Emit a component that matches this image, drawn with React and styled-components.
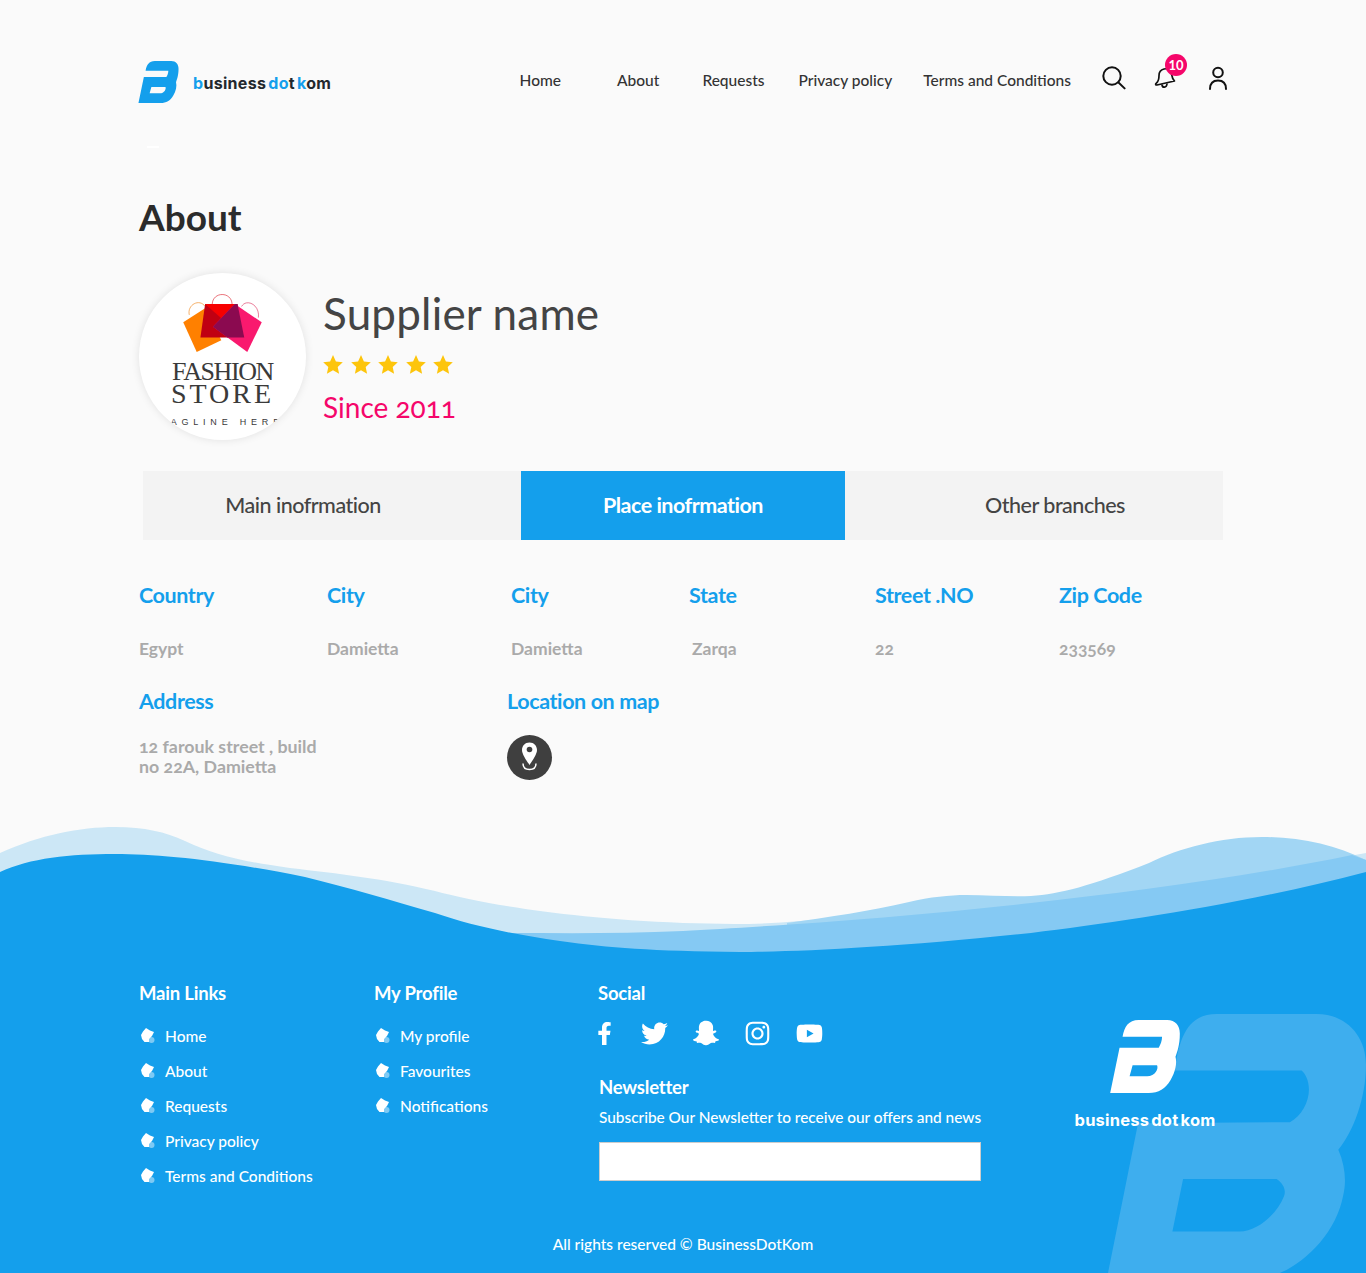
import styled, { createGlobalStyle } from 'styled-components';
import { FaFacebookF, FaTwitter, FaSnapchatGhost, FaInstagram, FaYoutube } from 'react-icons/fa';

const BLUE = '#149fec';
const PINK = '#f5066a';

const navLinks = [
  { label: 'Home', gap: 0 },
  { label: 'About', gap: 56 },
  { label: 'Requests', gap: 43 },
  { label: 'Privacy policy', gap: 34 },
  { label: 'Terms and Conditions', gap: 31 },
];

const infoCols = [
  { heading: 'Country', value: 'Egypt', width: 188 },
  { heading: 'City', value: 'Damietta', width: 184 },
  { heading: 'City', value: 'Damietta', width: 178 },
  { heading: 'State', value: 'Zarqa', width: 186, inset: 3 },
  { heading: 'Street .NO', value: '22', width: 184 },
  { heading: 'Zip Code', value: '233569', width: 170 },
];

const mainLinks = ['Home', 'About', 'Requests', 'Privacy policy', 'Terms and Conditions'];
const profileLinks = ['My profile', 'Favourites', 'Notifications'];

function LogoMark({ color, width, height }) {
  return (
    <svg width={width} height={height} viewBox="150 45 208 218" fill={color}>
      <path
        fillRule="evenodd"
        d="M187 95 C192 65 205 45 235 45 L320 45 C345 45 358 62 358 85 C358 120 350 140 345 155 C350 175 345 200 330 225 C315 250 295 263 265 263 L150 263 L178 128 L295 128 C300 118 305 108 305 95 Z M217 180 L290 180 C295 190 285 213 260 213 L208 213 Z"
      />
    </svg>
  );
}

function SearchIcon() {
  return (
    <svg width="24" height="24" viewBox="0 0 24 24" fill="none" stroke="#111" strokeWidth="2" strokeLinecap="round">
      <circle cx="10" cy="10" r="8.7" />
      <path d="M16.5 16.5 L22.6 22.4" />
    </svg>
  );
}

function BellIcon() {
  return (
    <svg width="22" height="24" viewBox="0 0 22 24" fill="none" stroke="#111" strokeWidth="1.7" strokeLinejoin="round" strokeLinecap="round">
      <path d="M10 3 C14 2 17 4 17.5 8 C18 11 18.5 13 20.5 15 L3 19 C1.5 19 1 18 2.5 17 C5 15 5 12 5 9.500 C5 6 7 3.700 10 3 Z" />
      <path d="M8 19 C8.500 22 12.500 22 13 18" />
    </svg>
  );
}

function UserIcon() {
  return (
    <svg width="20" height="24" viewBox="0 0 20 24" fill="none" stroke="#111" strokeWidth="2" strokeLinecap="round">
      <circle cx="10" cy="6.500" r="4.800" />
      <path d="M2 23 C2 17.500 5 14.500 10 14.500 C15 14.500 18 17.500 18 23" />
    </svg>
  );
}

function Star() {
  return (
    <svg width="20" height="19" viewBox="0 0 20 19" fill="#fdc50c">
      <path d="M10 0 L12.900 6.400 L19.800 7.200 L14.700 11.900 L16.100 18.800 L10 15.300 L3.900 18.800 L5.300 11.900 L0.200 7.200 L7.100 6.400 Z" />
    </svg>
  );
}

function Bags() {
  return (
    <svg width="106" height="60" viewBox="155 85 240 178">
      <path d="M175 150 C168 120 205 100 222 125" fill="none" stroke="#f08a24" strokeWidth="2" />
      <path d="M243 118 C245 80 300 80 302 118" fill="none" stroke="#e0303c" strokeWidth="2" />
      <path d="M330 125 C345 100 385 120 380 158" fill="none" stroke="#e0406a" strokeWidth="2" />
      <path d="M157 172 L222 130 L270 225 L197 260 Z" fill="#ff8000" />
      <path d="M222 118 L318 118 L338 217 L208 217 Z" fill="#c00012" />
      <path d="M222 118 L310 118 L270 160 Z" fill="#f70000" />
      <path d="M310 118 L390 172 L347 260 L245 185 Z" fill="#f9196e" />
      <path d="M310 118 L318 118 L338 217 L288 217 L245 185 Z" fill="#8b0a50" />
    </svg>
  );
}

function PinIcon() {
  return (
    <svg width="45" height="45" viewBox="0 0 45 45">
      <path d="M22.500 7.500 C27 7.500 30 11 30 15 C30 19.500 25 26 22.500 30 C20 26 15 19.500 15 15 C15 11 18 7.500 22.500 7.500 Z" fill="#fff" />
      <circle cx="22.500" cy="14.500" r="2.800" fill="#3f3f3f" />
      <path d="M16 28.500 C16 33 19 34.500 22.500 34.500 C26 34.500 29 33 29 28.500" fill="none" stroke="#fff" strokeWidth="1.500" />
    </svg>
  );
}

function Bullet() {
  return (
    <svg width="14" height="16" viewBox="0 0 14 16">
      <path d="M5 0 L9 2.500 L13 4 L11 8 L8 11 L8 14 L3.500 14 L1 11 L0 7 L2 3.500 Z" fill="#fff" />
      <circle cx="10.500" cy="12" r="3" fill="#fff" opacity="0.45" />
    </svg>
  );
}

function Waves() {
  return (
    <WaveArt viewBox="0 825 1366 130" preserveAspectRatio="none">
      <path
        fill="#cce7f6"
        d="M0 853 C40 835 80 827 115 827 C145 827 165 832 185 841 C215 855 240 861 290 868 C340 874 380 878 435 891 C480 903 560 918 683 923 C720 924 760 925 800 921 L1031 903 C1100 898 1220 880 1366 853 L1366 955 L0 955 Z"
      />
      <path
        fill="#a2d6f4"
        d="M787 923 C830 917 870 911 909 902 C930 897 950 895 966 895 C990 895 1010 897 1031 896 C1060 894 1090 886 1149 863 C1180 848 1220 837 1262 837 C1300 837 1335 845 1366 860 L1366 955 L787 955 Z"
      />
      <path
        fill="#85c9f3"
        d="M500 933 C560 933 620 934 683 931 C760 927 900 918 1031 903 C1130 892 1240 878 1352 855 L1366 860 L1366 955 L500 955 Z"
      />
      <path
        fill={BLUE}
        d="M0 872 C30 858 70 854 115 854 C160 854 220 860 305 877 C350 888 390 900 435 913 C470 925 510 934 560 941 C610 948 650 951 740 952 C800 952 900 947 1031 933 C1120 922 1240 905 1366 872 L1366 955 L0 955 Z"
      />
    </WaveArt>
  );
}

function LinkColumn({ title, links, width }) {
  return (
    <FooterCol $width={width}>
      <FooterTitle>{title}</FooterTitle>
      <FooterList>
        {links.map((link) => (
          <FooterLink key={link}>
            <Bullet />
            {link}
          </FooterLink>
        ))}
      </FooterList>
    </FooterCol>
  );
}

export default function App() {
  return (
    <>
      <GlobalStyle />
      <Container>
        <Header>
          <Brand>
            <LogoMark color={BLUE} width={41} height={42} />
            <BrandText>
              <em>b</em>usiness <em>do</em>t <em>k</em>om
            </BrandText>
          </Brand>
          <Nav>
            {navLinks.map(({ label, gap }) => (
              <NavLink key={label} $gap={gap}>
                {label}
              </NavLink>
            ))}
          </Nav>
          <IconBar>
            <SearchIcon />
            <BellWrap>
              <BellIcon />
              <Badge>10</Badge>
            </BellWrap>
            <UserIcon />
          </IconBar>
        </Header>
        <Dash />

        <PageTitle>About</PageTitle>

        <Profile>
          <Avatar>
            <Bags />
            <FashionLine>FASHION</FashionLine>
            <StoreLine>STORE</StoreLine>
            <TagLine>TAGLINE HERE</TagLine>
          </Avatar>
          <div>
            <SupplierName>Supplier name</SupplierName>
            <Stars>
              {[0, 1, 2, 3, 4].map((i) => (
                <Star key={i} />
              ))}
            </Stars>
            <Since>Since 2011</Since>
          </div>
        </Profile>

        <Tabs>
          <Tab $shift={-58}>Main inofrmation</Tab>
          <Tab $active>Place inofrmation</Tab>
          <Tab $shift={42}>Other branches</Tab>
        </Tabs>

        <InfoRow>
          {infoCols.map(({ heading, value, width, inset }) => (
            <InfoCol key={heading + width} $width={width}>
              <InfoHeading>{heading}</InfoHeading>
              <InfoValue $inset={inset}>{value}</InfoValue>
            </InfoCol>
          ))}
        </InfoRow>

        <DetailRow>
          <InfoCol $width={368}>
            <InfoHeading>Address</InfoHeading>
            <AddressText>
              12 farouk street , build
              <br />
              no 22A, Damietta
            </AddressText>
          </InfoCol>
          <InfoCol $width={300}>
            <InfoHeading>Location on map</InfoHeading>
            <PinButton>
              <PinIcon />
            </PinButton>
          </InfoCol>
        </DetailRow>
      </Container>

      <Footer>
        <Waves />
        <FooterBody>
          <Watermark viewBox="145 28 773 776" fill="#3eaeee">
            <path
              fillRule="evenodd"
              d="M345 197 C360 80 395 28 470 28 L770 28 C860 28 918 95 918 180 C918 280 880 380 835 435 C855 480 860 530 850 570 C830 680 740 770 660 804 L145 804 L235 355 L690 352 C725 335 747 290 747 255 C747 225 735 205 725 197 Z M370 522 L650 522 C670 535 680 555 672 575 C650 630 590 680 540 680 L338 680 Z"
            />
          </Watermark>
          <FooterRow>
            <LinkColumn title="Main Links" links={mainLinks} width={235} />
            <LinkColumn title="My Profile" links={profileLinks} width={224} />
            <SocialCol>
              <FooterTitle>Social</FooterTitle>
              <SocialRow>
                <FaFacebookF size={23} />
                <FaTwitter size={27} />
                <FaSnapchatGhost size={26} />
                <FaInstagram size={27} />
                <FaYoutube size={27} />
              </SocialRow>
              <NewsTitle>Newsletter</NewsTitle>
              <NewsText>Subscribe Our Newsletter to receive our offers and news</NewsText>
              <NewsInput type="text" />
            </SocialCol>
            <FooterBrand>
              <LogoMark color="#fff" width={70} height={73} />
              <FooterBrandText>business dot kom</FooterBrandText>
            </FooterBrand>
          </FooterRow>
          <Copyright>All rights reserved © BusinessDotKom</Copyright>
        </FooterBody>
      </Footer>
    </>
  );
}

const GlobalStyle = createGlobalStyle`
  * {
    box-sizing: border-box;
  }

  body {
    margin: 0;
    background: #fafafa;
    font-family: 'Lato', 'Open Sans', sans-serif;
    font-feature-settings: 'onum';
  }
`;

const Container = styled.div`
  width: 1366px;
  height: 825px;
  padding: 61px 138px 0;
`;

const Header = styled.header`
  display: flex;
  align-items: center;
  height: 42px;
`;

const Brand = styled.div`
  display: flex;
  align-items: center;
  width: 382px;
`;

const BrandText = styled.span`
  margin-left: 14px;
  margin-top: 2px;
  font-family: 'Inter', sans-serif;
  font-size: 16px;
  font-weight: 700;
  letter-spacing: 0.3px;
  word-spacing: -2px;
  color: #23282d;
  white-space: nowrap;

  em {
    font-style: normal;
    color: ${BLUE};
  }
`;

const Nav = styled.nav`
  display: flex;
  margin-bottom: 4px;
`;

const NavLink = styled.a`
  margin-left: ${({ $gap }) => $gap}px;
  font-size: 15.5px;
  font-weight: 500;
  color: #333;
  white-space: nowrap;
`;

const IconBar = styled.div`
  display: flex;
  align-items: center;
  gap: 30px;
  margin-left: 31px;
  margin-bottom: 8px;
`;

const BellWrap = styled.div`
  position: relative;
  display: flex;
  margin: 0 2px 0 -2px;
`;

const Badge = styled.span`
  position: absolute;
  top: -12px;
  left: 11px;
  width: 22px;
  height: 22px;
  border-radius: 50%;
  background: ${PINK};
  color: #fff;
  font-size: 13px;
  font-weight: 700;
  font-feature-settings: 'lnum';
  line-height: 22px;
  text-align: center;
`;

const Dash = styled.div`
  width: 12px;
  height: 2px;
  margin: 43px 0 0 9px;
  background: #fff;
`;

const PageTitle = styled.h1`
  margin: 46px 0 0 1px;
  font-size: 37px;
  line-height: 46px;
  font-weight: 700;
  color: #2b2b2b;
`;

const Profile = styled.section`
  display: flex;
  align-items: flex-start;
  gap: 17px;
  margin: 33px 0 0 1px;
`;

const Avatar = styled.div`
  display: flex;
  flex-direction: column;
  align-items: center;
  flex-shrink: 0;
  width: 167px;
  height: 167px;
  padding-top: 20px;
  overflow: hidden;
  border-radius: 50%;
  background: #fff;
  box-shadow: 0 0 8px rgba(0, 0, 0, 0.1);
  font-family: 'Liberation Serif', serif;
  color: #3a3a3a;
`;

const FashionLine = styled.span`
  margin-top: 7px;
  font-size: 26px;
  line-height: 24px;
  letter-spacing: -1.400px;
`;

const StoreLine = styled.span`
  font-size: 28px;
  line-height: 20px;
  letter-spacing: 3px;
`;

const TagLine = styled.span`
  margin-top: 12px;
  font-family: 'Liberation Sans', sans-serif;
  font-size: 9px;
  line-height: 12px;
  letter-spacing: 4.800px;
  white-space: nowrap;
`;

const SupplierName = styled.h2`
  margin: 13px 0 0;
  font-size: 44px;
  line-height: 54px;
  font-weight: 400;
  letter-spacing: 0.2px;
  color: #444;
`;

const Stars = styled.div`
  display: flex;
  gap: 7.600px;
  margin-top: 15px;
`;

const Since = styled.p`
  margin: 15px 0 0;
  font-size: 28px;
  line-height: 36px;
  color: ${PINK};
`;

const Tabs = styled.div`
  display: grid;
  grid-template-columns: 378px 324px 378px;
  height: 69px;
  margin: 31px 0 0 5px;
  width: 1080px;
  background: #f3f3f3;
`;

const Tab = styled.div`
  display: flex;
  align-items: center;
  justify-content: center;
  padding-bottom: 2px;
  padding-left: ${({ $shift }) => Math.max($shift || 0, 0)}px;
  padding-right: ${({ $shift }) => Math.max(-($shift || 0), 0)}px;
  font-size: 21.500px;
  letter-spacing: -0.5px;
  font-weight: ${({ $active }) => ($active ? 700 : 500)};
  color: ${({ $active }) => ($active ? '#fff' : '#444')};
  background: ${({ $active }) => ($active ? BLUE : 'transparent')};
`;

const InfoRow = styled.div`
  display: flex;
  margin: 43px 0 0 1px;
`;

const DetailRow = styled.div`
  display: flex;
  margin: 29px 0 0 1px;
`;

const InfoCol = styled.div`
  width: ${({ $width }) => $width}px;
  flex-shrink: 0;
`;

const InfoHeading = styled.h3`
  margin: 0;
  font-size: 21.500px;
  line-height: 24px;
  font-weight: 700;
  letter-spacing: -0.4px;
  color: ${BLUE};
`;

const InfoValue = styled.p`
  margin: 31px 0 0;
  padding-left: ${({ $inset }) => $inset || 0}px;
  font-size: 17.500px;
  line-height: 22px;
  font-weight: 700;
  color: #aaa;
`;

const AddressText = styled.p`
  margin: 23px 0 0;
  font-size: 17.800px;
  line-height: 20px;
  font-weight: 700;
  color: #aaa;
`;

const PinButton = styled.div`
  width: 45px;
  height: 45px;
  margin-top: 22px;
  border-radius: 50%;
  background: #3f3f3f;
`;

const Footer = styled.footer`
  width: 1366px;
`;

const WaveArt = styled.svg`
  display: block;
  width: 1366px;
  height: 130px;
`;

const FooterBody = styled.div`
  position: relative;
  height: 318px;
  padding: 26px 0 0 139px;
  overflow: hidden;
  background: ${BLUE};
  color: #fff;
`;

const Watermark = styled.svg`
  position: absolute;
  left: 1108px;
  top: 59px;
  width: 258px;
  height: 259px;
`;

const FooterRow = styled.div`
  position: relative;
  display: flex;
  height: 206px;
`;

const FooterCol = styled.div`
  width: ${({ $width }) => $width}px;
`;

const FooterTitle = styled.h4`
  margin: 0;
  font-size: 18.500px;
  line-height: 24px;
  font-weight: 700;
  letter-spacing: -0.2px;
  color: #fff;
`;

const FooterList = styled.ul`
  display: flex;
  flex-direction: column;
  gap: 13px;
  margin: 20px 0 0;
  padding: 0;
  list-style: none;
`;

const FooterLink = styled.li`
  display: flex;
  align-items: center;
  gap: 10px;
  height: 22px;
  padding-left: 2px;
  font-size: 15.500px;
  font-weight: 500;
`;

const SocialCol = styled.div`
  width: 383px;
`;

const SocialRow = styled.div`
  display: flex;
  align-items: center;
  gap: 25px;
  height: 26px;
  margin: 15px 0 0 -5px;
`;

const NewsTitle = styled.h4`
  margin: 29px 0 0 1px;
  font-size: 18.500px;
  line-height: 24px;
  font-weight: 700;
  letter-spacing: -0.2px;
`;

const NewsText = styled.p`
  margin: 8px 0 0 1px;
  font-size: 15.400px;
  line-height: 20px;
  font-weight: 500;
  white-space: nowrap;
`;

const NewsInput = styled.input`
  display: block;
  width: 382px;
  height: 39px;
  margin: 15px 0 0 1px;
  border: 1px solid #ccc;
  background: #fff;
`;

const FooterBrand = styled.div`
  display: flex;
  flex-direction: column;
  align-items: center;
  width: 142px;
  margin-left: 93px;
  padding-top: 39px;
`;

const FooterBrandText = styled.span`
  margin-top: 17px;
  font-family: 'Inter', sans-serif;
  font-size: 16.500px;
  line-height: 20px;
  font-weight: 700;
  letter-spacing: 0.2px;
  word-spacing: -2px;
  white-space: nowrap;
`;

const Copyright = styled.p`
  position: relative;
  margin: 46px 0 0 -139px;
  font-size: 15.500px;
  line-height: 22px;
  font-weight: 500;
  text-align: center;
`;
